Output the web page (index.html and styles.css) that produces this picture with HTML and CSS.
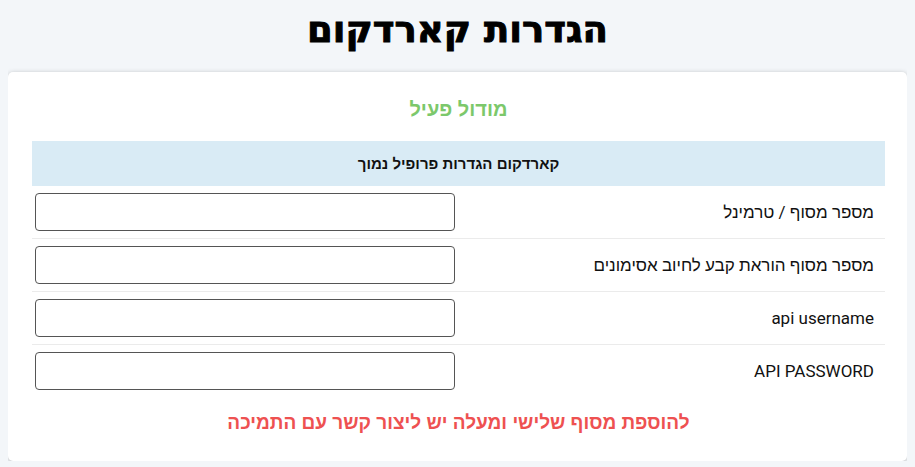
FILE: index.html
```html
<!DOCTYPE html>
<html lang="he" dir="rtl">
<head>
  <meta charset="UTF-8" />
  <title>הגדרות קארדקום</title>
  <link rel="stylesheet" href="styles.css">
</head>
<body>
  <h1>הגדרות קארדקום</h1>
  <div class="card">
    <div class="active">מודול פעיל</div>
    <table>
      <thead>
        <tr>
          <th colspan="2">קארדקום הגדרות פרופיל נמוך</th>
        </tr>
      </thead>
      <tbody>
        <tr>
          <td class="label">מספר מסוף / טרמינל</td>
          <td class="field"><input type="text" /></td>
        </tr>
        <tr>
          <td class="label">מספר מסוף הוראת קבע לחיוב אסימונים</td>
          <td class="field"><input type="text" /></td>
        </tr>
        <tr>
          <td class="label">api username</td>
          <td class="field"><input type="text" /></td>
        </tr>
        <tr>
          <td class="label">API PASSWORD</td>
          <td class="field"><input type="password" /></td>
        </tr>
      </tbody>
    </table>
    <div class="note">להוספת מסוף שלישי ומעלה יש ליצור קשר עם התמיכה</div>
  </div>
</body>
</html>
```

FILE: styles.css
```css
body {
  background: #f3f6f9;
  font-family: Roboto, "Liberation Sans", sans-serif;
  color: #111;
  margin: 8px;
}

h1 {
  text-align: center;
  font-family: "DejaVu Sans", sans-serif;
  font-size: 37px;
  font-weight: bold;
  color: #000;
  -webkit-text-stroke: 1px #000;
  margin: 0 0 20px;
  line-height: 44px;
}

.card {
  background: #fff;
  border-radius: 5px;
  box-shadow: 0 1px 5px rgba(0, 0, 0, 0.25);
  padding: 22px 22px 27px 24px;
}

.active {
  text-align: center;
  color: #7cc86b;
  font-family: "Liberation Sans", sans-serif;
  font-weight: bold;
  font-size: 20px;
  line-height: 30px;
  margin: 0 0 17px;
}

table {
  width: 100%;
  border-collapse: collapse;
}

th {
  background: #d9ebf5;
  font-family: "Liberation Sans", sans-serif;
  font-size: 15px;
  height: 45px;
  padding: 0;
}

td {
  border-top: 1px solid #ebebeb;
  height: 52px;
  padding: 0;
}

tbody tr:first-child td {
  border-top: none;
}

.label {
  text-align: right;
  padding-right: 11px;
  font-size: 17px;
}

.field {
  width: 420px;
  padding-left: 3px;
}

input {
  width: 420px;
  height: 38px;
  box-sizing: border-box;
  border: 1px solid #555;
  border-radius: 4px;
  display: block;
}

.note {
  text-align: center;
  color: #ee5151;
  font-family: "Liberation Sans", sans-serif;
  font-weight: bold;
  font-size: 19px;
  margin: 15px 0 0;
  line-height: 22px;
}
```
